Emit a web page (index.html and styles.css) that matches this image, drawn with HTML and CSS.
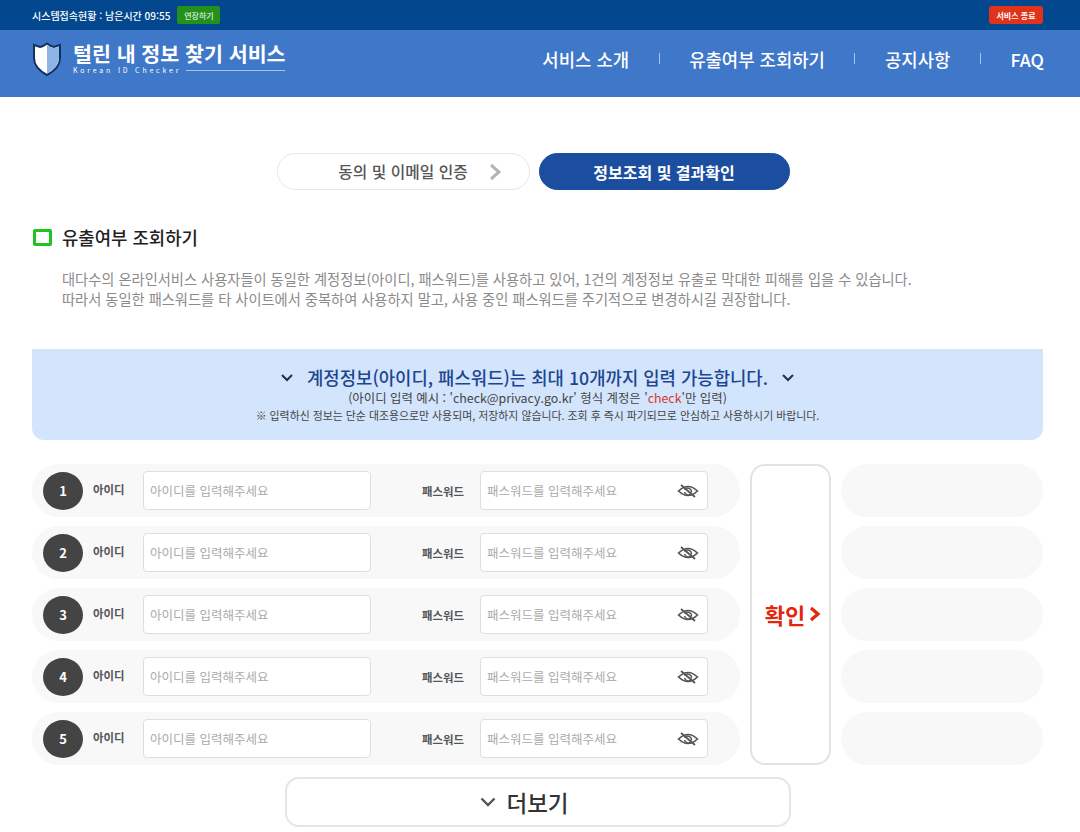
FILE: index.html
```html
<!DOCTYPE html>
<html lang="ko">
<head>
    <meta charset="UTF-8">
    <title>털린 내 정보 찾기 서비스</title>
    <link rel="stylesheet" href="styles.css">
</head>
<body>

<div class="topbar">
    <div class="session">
        <span>시스템접속현황 : 남은시간 09:55</span>
        <button class="extend-btn">연장하기</button>
    </div>
    <button class="exit-btn">서비스 종료</button>
</div>

<header class="navbar">
    <a class="logo">
        <svg class="shield" width="30" height="34" viewBox="0 0 30 34">
            <path d="M2 3 L8 5 Q12 4 15 1.5 Q18 4 22 5 L28 3 L28 16 Q28 26 15 33 Q2 26 2 16 Z" fill="#fff" stroke="#12315f" stroke-width="2"/>
            <path d="M15 3 Q18 5.5 22 6.2 L27 4.5 L27 16 Q27 25 15 31.8 Z" fill="#8db4e4"/>
        </svg>
        <span class="logo-text">
            <span class="logo-title">털린 내 정보 찾기 서비스</span>
            <span class="logo-sub"><span>Korean ID Checker</span><i></i></span>
        </span>
    </a>
    <nav class="menu">
        <a>서비스 소개</a>
        <i></i>
        <a>유출여부 조회하기</a>
        <i></i>
        <a>공지사항</a>
        <i></i>
        <a>FAQ</a>
    </nav>
</header>

<main>
    <!-- Steps -->
    <div class="steps">
        <div class="step">
            <span>동의 및 이메일 인증</span>
            <svg width="14" height="18" viewBox="0 0 14 18"><path d="M3 2 L11 9 L3 16" fill="none" stroke="#b4b4b4" stroke-width="3"/></svg>
        </div>
        <div class="step active">정보조회 및 결과확인</div>
    </div>

    <h2 class="section-title"><i></i>유출여부 조회하기</h2>
    <p class="section-desc">대다수의 온라인서비스 사용자들이 동일한 계정정보(아이디, 패스워드)를 사용하고 있어, 1건의 계정정보 유출로 막대한 피해를 입을 수 있습니다.<br>따라서 동일한 패스워드를 타 사이트에서 중복하여 사용하지 말고, 사용 중인 패스워드를 주기적으로 변경하시길 권장합니다.</p>

    <!-- Notice -->
    <div class="notice">
        <div class="notice-title">
            <svg width="12" height="8" viewBox="0 0 12 8"><path d="M1 1 L6 6 L11 1" fill="none" stroke="#1f2f4f" stroke-width="2"/></svg>
            <strong>계정정보(아이디, 패스워드)는 최대 10개까지 입력 가능합니다.</strong>
            <svg width="12" height="8" viewBox="0 0 12 8"><path d="M1 1 L6 6 L11 1" fill="none" stroke="#1f2f4f" stroke-width="2"/></svg>
        </div>
        <div class="notice-sub">(아이디 입력 예시 : 'check@privacy.go.kr' 형식 계정은 '<em>check</em>'만 입력)</div>
        <div class="notice-small">※ 입력하신 정보는 단순 대조용으로만 사용되며, 저장하지 않습니다. 조회 후 즉시 파기되므로 안심하고 사용하시기 바랍니다.</div>
    </div>

    <!-- Account rows -->
    <div class="lookup">
        <div class="rows">
            <div class="row">
                <span class="num">1</span>
                <label class="id-label">아이디</label>
                <input class="text-input" placeholder="아이디를 입력해주세요">
                <label class="pw-label">패스워드</label>
                <div class="pw-box">
                    <input class="text-input" placeholder="패스워드를 입력해주세요">
                    <svg class="eye" width="22" height="16" viewBox="0 0 22 16"><path d="M1.5 8 Q11 -1 20.5 8 Q11 17 1.5 8 Z" fill="none" stroke="#555" stroke-width="1.6"/><path d="M7.5 6.5 A4 4 0 0 1 14.5 9.5 M14 11 A4 4 0 0 1 7.5 9" fill="none" stroke="#555" stroke-width="1.4"/><path d="M4 2 L18 14" stroke="#555" stroke-width="1.8"/></svg>
                </div>
            </div>
            <div class="row">
                <span class="num">2</span>
                <label class="id-label">아이디</label>
                <input class="text-input" placeholder="아이디를 입력해주세요">
                <label class="pw-label">패스워드</label>
                <div class="pw-box">
                    <input class="text-input" placeholder="패스워드를 입력해주세요">
                    <svg class="eye" width="22" height="16" viewBox="0 0 22 16"><path d="M1.5 8 Q11 -1 20.5 8 Q11 17 1.5 8 Z" fill="none" stroke="#555" stroke-width="1.6"/><path d="M7.5 6.5 A4 4 0 0 1 14.5 9.5 M14 11 A4 4 0 0 1 7.5 9" fill="none" stroke="#555" stroke-width="1.4"/><path d="M4 2 L18 14" stroke="#555" stroke-width="1.8"/></svg>
                </div>
            </div>
            <div class="row">
                <span class="num">3</span>
                <label class="id-label">아이디</label>
                <input class="text-input" placeholder="아이디를 입력해주세요">
                <label class="pw-label">패스워드</label>
                <div class="pw-box">
                    <input class="text-input" placeholder="패스워드를 입력해주세요">
                    <svg class="eye" width="22" height="16" viewBox="0 0 22 16"><path d="M1.5 8 Q11 -1 20.5 8 Q11 17 1.5 8 Z" fill="none" stroke="#555" stroke-width="1.6"/><path d="M7.5 6.5 A4 4 0 0 1 14.5 9.5 M14 11 A4 4 0 0 1 7.5 9" fill="none" stroke="#555" stroke-width="1.4"/><path d="M4 2 L18 14" stroke="#555" stroke-width="1.8"/></svg>
                </div>
            </div>
            <div class="row">
                <span class="num">4</span>
                <label class="id-label">아이디</label>
                <input class="text-input" placeholder="아이디를 입력해주세요">
                <label class="pw-label">패스워드</label>
                <div class="pw-box">
                    <input class="text-input" placeholder="패스워드를 입력해주세요">
                    <svg class="eye" width="22" height="16" viewBox="0 0 22 16"><path d="M1.5 8 Q11 -1 20.5 8 Q11 17 1.5 8 Z" fill="none" stroke="#555" stroke-width="1.6"/><path d="M7.5 6.5 A4 4 0 0 1 14.5 9.5 M14 11 A4 4 0 0 1 7.5 9" fill="none" stroke="#555" stroke-width="1.4"/><path d="M4 2 L18 14" stroke="#555" stroke-width="1.8"/></svg>
                </div>
            </div>
            <div class="row">
                <span class="num">5</span>
                <label class="id-label">아이디</label>
                <input class="text-input" placeholder="아이디를 입력해주세요">
                <label class="pw-label">패스워드</label>
                <div class="pw-box">
                    <input class="text-input" placeholder="패스워드를 입력해주세요">
                    <svg class="eye" width="22" height="16" viewBox="0 0 22 16"><path d="M1.5 8 Q11 -1 20.5 8 Q11 17 1.5 8 Z" fill="none" stroke="#555" stroke-width="1.6"/><path d="M7.5 6.5 A4 4 0 0 1 14.5 9.5 M14 11 A4 4 0 0 1 7.5 9" fill="none" stroke="#555" stroke-width="1.4"/><path d="M4 2 L18 14" stroke="#555" stroke-width="1.8"/></svg>
                </div>
            </div>
        </div>

        <button class="confirm-btn">확인<svg width="12" height="16" viewBox="0 0 12 16"><path d="M2 2 L9 8 L2 14" fill="none" stroke="#e4260c" stroke-width="3.2"/></svg></button>

        <div class="results">
            <div class="result"></div>
            <div class="result"></div>
            <div class="result"></div>
            <div class="result"></div>
            <div class="result"></div>
        </div>
    </div>

    <button class="more-btn">
        <svg width="16" height="10" viewBox="0 0 16 10"><path d="M1.5 1.5 L8 8 L14.5 1.5" fill="none" stroke="#555" stroke-width="2.4"/></svg>
        더보기
    </button>
</main>

</body>
</html>
```

FILE: styles.css
```css
* {
    box-sizing: border-box;
}
body {
    font-family: "Noto Sans CJK KR", "Noto Sans", sans-serif;
    margin: 0;
    padding: 0;
    background-color: #fff;
    color: #333;
    overflow-x: hidden;
}
button {
    font-family: inherit;
    cursor: pointer;
}

/* top bar */
.topbar {
    height: 30px;
    background-color: #03488e;
    display: flex;
    align-items: center;
    justify-content: space-between;
    padding: 0 37px 0 32px;
}
.session {
    display: flex;
    align-items: center;
    gap: 7px;
    color: #fff;
    font-size: 10px;
    font-weight: 500;
}
.extend-btn {
    height: 18px;
    width: 43px;
    padding: 0;
    border: none;
    border-radius: 2px;
    background-color: #23911b;
    color: #fff;
    font-size: 8px;
}
.exit-btn {
    height: 18px;
    width: 54px;
    padding: 0;
    border: none;
    border-radius: 3px;
    background-color: #e0331a;
    color: #fff;
    font-size: 8px;
    font-weight: 700;
}

/* nav */
.navbar {
    height: 67px;
    background-color: #3f77c9;
    display: flex;
    align-items: center;
    justify-content: space-between;
    padding: 0 36px 10px 32px;
    color: #fff;
}
.logo {
    display: flex;
    align-items: center;
    gap: 11px;
}
.logo-text {
    display: flex;
    flex-direction: column;
    width: 212px;
}
.logo-title {
    font-size: 20.6px;
    font-weight: 700;
    line-height: 22px;
    white-space: nowrap;
}
.logo-sub {
    display: flex;
    align-items: center;
    gap: 5px;
    margin-top: 2px;
    font-size: 7px;
    line-height: 9px;
    letter-spacing: 2.8px;
    white-space: nowrap;
}
.logo-sub i {
    flex: 1;
    height: 1px;
    background-color: #a9c4ea;
}
.menu {
    display: flex;
    align-items: center;
    font-size: 17.8px;
    font-weight: 500;
}
.menu i {
    width: 1px;
    height: 11px;
    margin: 0 29.5px;
    background-color: #a9c4ea;
}

/* steps */
main {
    padding: 0 37px 0 32px;
}
.steps {
    display: flex;
    justify-content: center;
    gap: 9px;
    padding-top: 56px;
    padding-right: 9px;
}
.step {
    width: 253px;
    height: 37px;
    border: 1px solid #e6e6e6;
    border-radius: 19px;
    display: flex;
    align-items: center;
    justify-content: center;
    gap: 20px;
    padding-left: 34px;
    font-size: 15.8px;
    font-weight: 500;
    color: #555;
}
.step.active {
    width: 251px;
    padding-left: 0;
    border-color: #1c4ea0;
    background-color: #1c4ea0;
    color: #fff;
    font-size: 16px;
    font-weight: 700;
}

/* section heading */
.section-title {
    display: flex;
    align-items: center;
    gap: 10px;
    margin: 35px 0 0 1px;
    font-size: 17.8px;
    font-weight: 500;
    line-height: 24px;
    color: #222;
}
.section-title i {
    width: 19px;
    height: 17px;
    border: 3px solid #1ec51a;
    border-radius: 2px;
}
.section-desc {
    margin: 20px 0 0 30px;
    font-size: 14.25px;
    line-height: 20px;
    color: #8a8a8a;
    white-space: nowrap;
}

/* notice box */
.notice {
    height: 91px;
    margin-top: 40px;
    padding-top: 16px;
    background-color: #d3e4fd;
    border-radius: 0 0 12px 12px;
    text-align: center;
}
.notice-title {
    display: flex;
    align-items: center;
    justify-content: center;
    gap: 14px;
    font-size: 17.8px;
    line-height: 25px;
    color: #1c4690;
}
.notice-title strong {
    font-weight: 500;
}
.notice-sub {
    font-size: 12.4px;
    line-height: 17px;
    color: #444;
}
.notice-small {
    font-size: 10.9px;
    line-height: 17px;
    color: #444;
}
.notice-sub em {
    font-style: normal;
    color: #d8382c;
}

/* account rows */
.lookup {
    display: grid;
    grid-template-columns: 708px 81px 202px;
    gap: 10px;
    margin-top: 24px;
    width: 1011px;
}
.rows, .results {
    display: flex;
    flex-direction: column;
    gap: 9px;
}
.row {
    height: 53px;
    padding-left: 11px;
    background-color: #f8f8f8;
    border-radius: 27px;
    display: flex;
    align-items: center;
}
.num {
    width: 40px;
    height: 38px;
    border-radius: 50%;
    background-color: #444;
    color: #fff;
    font-family: "Noto Sans CJK KR", serif;
    font-size: 13px;
    font-weight: 700;
    display: flex;
    align-items: center;
    justify-content: center;
}
.id-label, .pw-label {
    font-size: 11.4px;
    font-weight: 700;
    color: #555;
}
.id-label {
    width: 50px;
    margin: -4px 0 0 10px;
}
.pw-label {
    width: 58px;
    margin-left: 51px;
}
.text-input {
    width: 228px;
    height: 39px;
    padding: 0 6px;
    border: 1.5px solid #dedede;
    border-radius: 4px;
    background-color: #fff;
    font-family: inherit;
    font-size: 12.5px;
}
.text-input::placeholder {
    color: #aaa;
}
.pw-box {
    position: relative;
    display: flex;
}
.eye {
    position: absolute;
    right: 9px;
    top: 12px;
}
.confirm-btn {
    height: 301px;
    padding: 0 0 2px 5px;
    border: 2px solid #e2e2e2;
    border-radius: 15px;
    background-color: #fff;
    color: #e4260c;
    font-size: 22px;
    font-weight: 700;
    display: flex;
    align-items: center;
    justify-content: center;
    gap: 4px;
}
.result {
    height: 53px;
    background-color: #f8f8f8;
    border-radius: 27px;
}

/* more */
.more-btn {
    display: flex;
    align-items: center;
    justify-content: center;
    gap: 10px;
    width: 506px;
    height: 50px;
    margin: 12px 0 0 253px;
    padding: 0 27px 0 0;
    border: 2px solid #e6e6e6;
    border-radius: 14px;
    background-color: #fff;
    color: #333;
    font-size: 22.5px;
    font-weight: 500;
}
```
